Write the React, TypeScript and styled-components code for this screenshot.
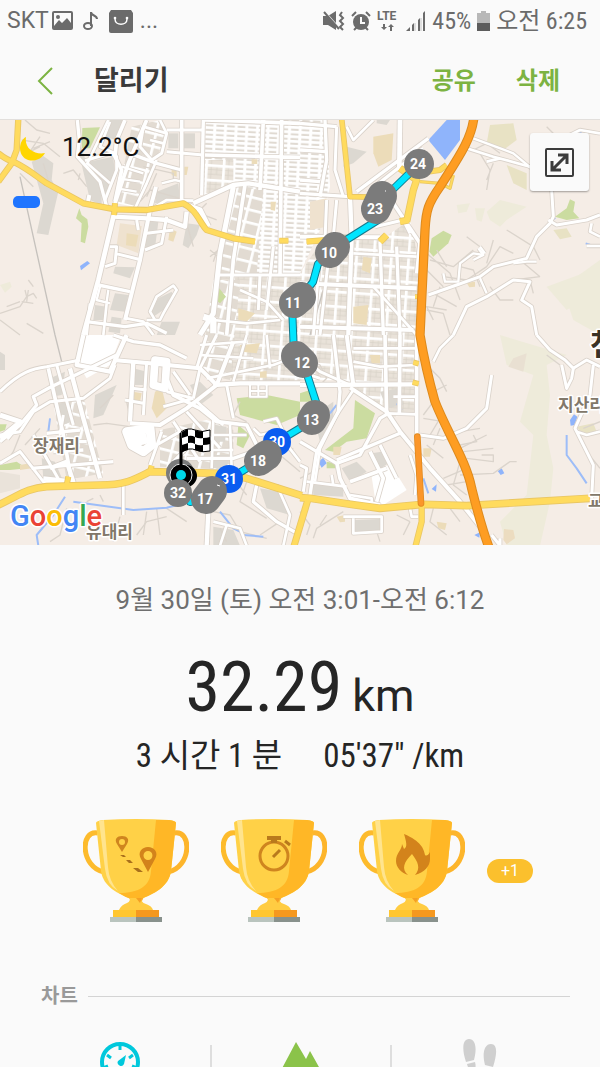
import React from 'react';
import styled, { createGlobalStyle } from 'styled-components';

const GlobalStyle = createGlobalStyle`
  * { box-sizing: border-box; }
  body { margin: 0; background: #fafafa; }
  button { font: inherit; color: inherit; background: none; border: 0; padding: 0; cursor: pointer; }
  h1, h2, p, ul { margin: 0; padding: 0; font-weight: inherit; }
`;

const sans = `Roboto, "Noto Sans CJK KR", sans-serif`;
const condensed = `"Roboto Condensed", Roboto, "Noto Sans CJK KR", sans-serif`;

const Screen = styled.div`
  display: flex;
  flex-direction: column;
  height: 100vh;
  overflow: hidden;
  background: #fafafa;
  font-family: ${sans};
  color: #252525;
`;

const StatusBar = styled.div`
  display: flex;
  flex: none;
  justify-content: space-between;
  align-items: center;
  height: 41px;
  padding: 0 13px 0 7px;
  color: #6b6b6b;
  font-size: 23px;
  line-height: 40px;
`;

const StatusGroup = styled.div<{ $gap: number }>`
  display: flex;
  align-items: center;
  gap: ${(p) => p.$gap}px;
  white-space: nowrap;
  svg { display: block; flex: none; }
`;

const StatusText = styled.span`
  font-family: ${condensed};
  font-size: 24px;
`;

const Header = styled.header`
  display: flex;
  flex: none;
  align-items: center;
  height: 79px;
  padding: 2px 40px 0 37px;
  border-bottom: 1px solid #e2dfdc;
`;

const BackButton = styled.button`
  display: flex;
  width: 57px;
  height: 48px;
  align-items: center;
`;

const Title = styled.h1`
  flex: 1;
  font-size: 27px;
  line-height: 40px;
  font-weight: 700;
  color: #3a3a3a;
`;

const Actions = styled.div`
  display: flex;
  gap: 40px;
`;

const TextButton = styled.button`
  font-size: 24px;
  line-height: 40px;
  font-weight: 700;
  color: #7cb342;
`;

const Content = styled.main`
  flex: 1;
  min-height: 0;
  overflow-y: auto;
  scrollbar-width: none;
`;

const MapPanel = styled.section`
  position: relative;
  > svg { display: block; width: 100%; height: auto; }
`;

const Weather = styled.div`
  position: absolute;
  top: 11px;
  left: 18px;
  display: flex;
  align-items: center;
  gap: 14px;
  font-size: 26px;
  line-height: 32px;
  color: #111;
`;

const ExpandButton = styled.button`
  position: absolute;
  top: 13px;
  right: 11px;
  display: flex;
  align-items: center;
  justify-content: center;
  width: 59px;
  height: 58px;
  border-radius: 3px;
  background: #fafafa;
  box-shadow: 0 1px 2px rgba(0, 0, 0, 0.35);
`;

const Summary = styled.section`
  display: flex;
  flex-direction: column;
  align-items: center;
`;

const DateLine = styled.p`
  margin-top: 35px;
  font-size: 26px;
  line-height: 40px;
  color: #6f6f6f;
`;

const Distance = styled.p`
  display: flex;
  align-items: baseline;
  gap: 10px;
  margin-top: 25px;
  font-family: ${condensed};
  font-size: 70px;
  line-height: 84px;
`;

const Unit = styled.span`
  font-family: ${sans};
  font-size: 45px;
  line-height: 46px;
`;

const Stats = styled.div`
  display: flex;
  gap: 41px;
  margin-top: 3px;
  font-family: ${condensed};
  font-size: 33px;
  line-height: 48px;
`;

const Awards = styled.ul`
  display: flex;
  align-items: center;
  gap: 32px;
  margin-top: 39px;
  padding-left: 16px;
  list-style: none;
  svg { display: block; }
`;

const MoreBadge = styled.button`
  width: 46px;
  height: 24px;
  margin-left: -10px;
  border-radius: 12px;
  background: #fbc02d;
  color: #fff;
  font-size: 16px;
  line-height: 24px;
`;

const SectionTitle = styled.h2`
  display: flex;
  align-items: center;
  gap: 10px;
  margin: 59px 30px 0 41px;
  font-size: 20px;
  line-height: 28px;
  font-weight: 700;
  color: #999;
  &::after {
    content: '';
    flex: 1;
    height: 1px;
    background: #d4d4d4;
  }
`;

const ChartTabs = styled.div`
  display: flex;
  margin: 28px 30px 0;
  padding-bottom: 30px;
`;

const ChartTab = styled.button`
  flex: 1;
  display: flex;
  justify-content: center;
  height: 48px;
  & + & { background: linear-gradient(#dedede, #dedede) left 7px / 2px 34px no-repeat; }
`;

/* ---------- map data, drawn on a 1800 x 1275 canvas of four tiles ---------- */

type Road = [string, number];
interface Tile {
  x: number;
  y: number;
  areas: [string, string][];
  lanes: string[];
  roads: Road[];
  yellow: Road[];
  water: string[];
}

const GREEN = '#cbdca0';
const PALE = '#eeebda';
const TAN = '#ecdcb9';
const GREY = '#dcd8d1';
const BLUE = '#8fb4fb';
const SAND = '#efe2cf';
const WHITE = '#fff';

const tiles: Tile[] = [
  {
    x: 0,
    y: 0,
    areas: [
      ['M247 24L300 22L270 85L245 85Z', GREEN],
      ['M238 265L228 295L245 310L242 365L255 370L265 320L262 298L245 285Z', GREEN],
      ['M240 438L262 423L270 430L243 451Z', BLUE],
      ['M95 125L130 108L160 130L155 180L175 215L145 345L110 340L130 250Z', GREY],
      ['M230 70L245 85L260 130L305 200L305 255L270 240Z', GREY],
      ['M360 310L425 318L415 400L350 375Z', SAND],
      ['M380 340L415 345L408 380L378 376Z', TAN],
      ['M345 440L405 442L390 475L340 460Z', GREY],
      ['M265 125L340 110L345 165L312 235Z', GREY],
      ['M330 0L370 0L350 60L310 50Z', GREY],
      ['M505 40L535 40L535 85L505 85Z', GREY],
      ['M552 40L585 40L585 85L552 85Z', GREY],
      ['M515 140L530 140L530 170L515 165Z', TAN],
      ['M553 140L565 140L560 165L553 165Z', TAN],
      ['M470 215L535 190L540 240L465 250Z', GREY],
      ['M560 310L600 315L590 345L565 385L548 375Z', GREY],
      ['M510 325L530 335L520 365L505 360Z', TAN],
      ['M445 300L475 305L465 385L435 390Z', GREY],
      ['M285 555L320 560L315 600L280 600Z', GREY],
      ['M345 520L385 525L375 575L330 570Z', GREY],
      ['M335 590L365 595L360 640L325 635Z', GREY],
      ['M515 515L520 530L490 570L460 590L455 570L475 535Z', GREY],
      ['M485 605L540 605L525 645L470 645Z', GREY],
      ['M0 495L30 485L35 500L15 518Z', PALE],
      ['M650 495L678 530L660 550L648 540Z', GREEN],
      ['M715 565L765 580L740 605L715 600Z', TAN],
      ['M755 118L772 118L772 132L755 132ZM812 245L828 245L825 272L812 270Z', TAN],
    ],
    lanes: [
      'M75 0L110 30L150 40M65 60L130 70L180 110M120 50L90 95L120 80M100 85L150 65',
      'M190 160L220 150L260 200M240 160L235 180M130 130L150 200M60 160L100 200',
      'M75 510L80 530L100 520L110 535M80 530L60 560L0 580M65 545L100 550M80 610L130 640M0 600L60 645M85 510L80 545',
      'M630 410L655 390M630 390L655 410M640 425L650 395',
      'M420 245L450 210L540 235M610 285L650 300M600 270L620 250M430 140L520 160L520 180',
      'M100 500L85 480M20 560L60 545M470 160L440 230M560 310L580 380',
    ],
    roads: [
      ['M232 0L238 60L232 110L300 185L320 260', 9],
      ['M325 0L262 130L330 190', 7],
      ['M255 122L330 100L350 110L350 150L315 240', 8],
      ['M330 5L300 80L345 100', 7],
      ['M375 0L350 60L345 110L365 150L345 245', 10],
      ['M440 0L385 130L345 250', 10],
      ['M470 120L440 190L405 265', 7],
      ['M375 95L470 130L545 150', 9],
      ['M355 175L420 185M365 140L430 160M350 205L410 215', 6],
      ['M430 20L500 40L485 100L455 120L420 80Z', 8],
      ['M480 0L500 40M450 60L490 70', 7],
      ['M545 0L545 245', 10],
      ['M500 30L610 30M500 95L610 105', 8],
      ['M610 0L605 225', 9],
      ['M580 250L700 195L745 190L900 215', 12],
      ['M545 250L600 270L625 320', 15],
      ['M485 190L525 180L545 185', 6],
      ['M468 200L452 260M268 225L263 250', 11],
      ['M450 270L500 240L580 242', 7],
      ['M345 270L295 480L250 645', 13],
      ['M450 270L420 420L375 600', 11],
      ['M340 290L440 295L500 300L555 320L560 275', 12],
      ['M500 290L485 370L435 390M440 340L520 330', 8],
      ['M410 300L415 330', 8],
      ['M345 400L425 420M330 380L350 380L345 430L315 440', 8],
      ['M295 495L390 515', 9],
      ['M325 510L320 545M300 500L290 540L330 550', 6],
      ['M465 600L450 575L470 530L520 497L530 510L490 580L480 600L440 600', 7],
      ['M700 200L660 400L640 580L600 645', 14],
      ['M735 195L700 420L680 645', 10],
      ['M260 605L375 620L440 610L500 640', 9],
      ['M380 595L430 605L460 645', 7],
      ['M270 550L260 645M320 550L310 645', 7],
      ['M650 465L900 465M780 465L775 570M820 380L800 570', 8],
      ['M615 0L900 10M615 105L900 112M790 0L780 210M845 0L840 465', 10],
      ['M720 510L800 545L850 600M640 600L740 610L840 600', 7],
      ['M610 590L640 600L640 640', 18],
    ],
    yellow: [
      ['M-5 100Q20 120 40 125C90 150 110 170 140 190L250 250L345 268L440 270L550 250C590 270 600 310 620 330L700 355L765 365', 14],
      ['M55 -5L50 90L35 130L-5 185', 14],
      ['M838 362L865 362M345 250L342 285', 13],
    ],
    water: [],
  },
  {
    x: 900,
    y: 0,
    areas: [
      ['M440 0L480 0L480 60L435 120L385 60Z', BLUE],
      ['M388 395L395 355L430 332L455 345L445 370L400 410Z', GREEN],
      ['M765 290L800 265L810 238L825 245L820 275L838 295L800 300Z', GREEN],
      ['M560 275L600 240L680 260L620 300L600 320L570 300Z', PALE],
      ['M470 255L510 250L500 275L475 280ZM525 265L555 265L545 305L530 300Z', PALE],
      ['M900 420L830 470L800 540L820 600L900 645Z', PALE],
      ['M740 500L850 460L880 520L800 570Z', PALE],
      ['M570 15L640 10L650 60L610 90L560 70Z', '#e8e2c4'],
      ['M620 135L680 160L680 210L640 190Z', '#e8e2c4'],
      ['M760 330L800 325L815 350L780 358Z', '#e8e2c4'],
      ['M220 50L280 40L275 120L235 140L220 100Z', TAN],
      ['M140 80L200 95L160 130L130 140Z', GREY],
      ['M230 0L270 0L260 15L230 10Z', GREY],
      ['M30 245L80 235L80 320L30 330Z', SAND],
      ['M160 560L205 555L200 615L160 610Z', TAN],
      ['M190 410L215 415L210 460L185 450Z', TAN],
      ['M500 488L525 485L525 500L508 502Z', TAN],
    ],
    lanes: [
      'M380 400L450 460L480 540M390 420L460 440L520 390M400 520L470 560M400 600L380 560L440 570',
      'M380 450L430 500M430 470L500 480L560 440L600 380L640 400M560 430L580 360',
      'M540 100L570 150L560 210M580 130L560 180M620 330L700 380L720 420M660 420L720 470M640 480L720 470M690 480L700 520',
      'M380 570L430 580L450 645M480 440L520 450L540 500M420 500L400 560M570 500L600 540L640 540',
      'M520 90L560 70L600 100M740 20L780 60M410 390L440 440M500 350L540 380',
    ],
    roads: [
      ['M385 55L170 215M370 85L230 195', 9],
      ['M300 0L298 150', 13],
      ['M0 220L150 230M0 180L60 185M0 90L80 95M0 10L110 20', 9],
      ['M75 0L80 120L60 230', 9],
      ['M110 20L105 150L130 230', 8],
      ['M200 20L160 60L140 20M200 20L220 0', 7],
      ['M500 85L580 110L690 140', 7],
      ['M520 55L640 100L700 150', 6],
      ['M560 125L600 115', 7],
      ['M755 210L760 290L750 310L710 350L680 415L580 440L540 470L470 495L385 525', 8],
      ['M745 300L770 315L860 300L900 285', 8],
      ['M900 350L870 335L875 310M860 378L900 378', 7],
      ['M430 460L435 485L475 485L480 430L520 400L550 405', 6],
      ['M535 385L550 405L520 420M540 380L555 400', 6],
      ['M540 475L560 520M640 430L680 425L710 425', 6],
      ['M460 645L500 560L560 530L640 480L690 485L665 540L695 560L710 645', 8],
      ['M780 60L840 30L900 40', 7],
      ['M280 250L360 370L350 460', 10],
      ['M225 320L310 300L330 340', 8],
      ['M150 230L155 350L145 645', 12],
      ['M80 240L75 360M110 240L100 350', 8],
      ['M240 365L250 645M290 380L300 645', 9],
      ['M0 490L350 505M0 350L240 352M0 620L340 630', 11],
      ['M220 500L350 645M160 400L350 410', 7],
      ['M60 400L40 645M85 420L60 645', 8],
    ],
    yellow: [
      ['M125 -5L150 230L240 232', 12],
      ['M300 145L350 180L340 210L320 305M325 300L300 305M260 345L240 365', 17],
      ['M350 160L420 150L440 135', 13],
      ['M360 185L420 190L450 205L460 165', 5],
      ['M20 365L140 355', 14],
      ['M345 530L360 530', 10],
    ],
    water: ['M830 32L845 38M760 290L765 298M857 370L870 374'],
  },
  {
    x: 0,
    y: 645,
    areas: [
      ['M0 50L15 60L15 105L0 105Z', GREY],
      ['M285 180L350 150L310 240L280 250Z', GREY],
      ['M255 0L365 0L330 90L260 130L235 90Z', WHITE],
      ['M150 130L195 110L185 180L155 185ZM165 210L205 200L215 260L175 275Z', GREY],
      ['M210 208L222 265L215 265L205 208Z', '#8f9bb0'],
      ['M465 170L485 160L500 220L470 250L455 220Z', TAN],
      ['M400 170L425 175L420 200L400 205Z', TAN],
      ['M400 100L440 110L430 150L400 150Z', GREY],
      ['M710 190L800 180L900 200L900 240L830 270L720 240Z', GREEN],
      ['M715 270L750 300L730 340L710 330Z', GREEN],
      ['M0 390L50 380L80 400L30 405L0 405Z', GREEN],
      ['M0 268L20 268L15 285L0 290Z', GREEN],
      ['M125 370L165 380L190 440L130 430Z', GREY],
      ['M60 390L90 385L95 400L60 405Z', TAN],
      ['M590 300L620 300L620 340L590 335Z', GREEN],
      ['M640 270L680 275L675 320L640 320ZM640 360L690 360L680 400L640 400Z', GREY],
      ['M720 30L780 25L770 55L725 50Z', TAN],
      ['M780 110L800 108L800 128L780 128Z', TAN],
      ['M570 150L600 140L640 180L600 210Z', GREY],
      ['M0 410L60 420L60 460L0 475Z', '#eae3da'],
      ['M780 460L840 470L870 540L800 520Z', GREY],
      ['M640 575L700 585L720 632L640 632Z', GREY],
    ],
    lanes: [
      'M280 270L320 265L390 275M20 380L40 350L60 300M75 330L120 280',
      'M300 480L310 500M200 520L180 600L150 620M260 500L280 490M360 545L340 620M440 530L430 600',
      'M410 600L440 560L500 545M470 520L480 600M500 520L560 560M640 530L690 540L720 590L800 610',
      'M700 430L740 480M740 440L720 500L800 550M780 600L840 560M660 580L680 620M720 200L700 240L740 260',
      'M760 320L820 360L880 340M840 360L900 410M300 220L340 180M380 200L400 300',
    ],
    roads: [
      ['M0 170C60 110 100 100 140 95L240 75', 8],
      ['M250 0L230 90L330 110L380 0', 12],
      ['M340 75L450 85L600 100L650 150', 11],
      ['M0 320L60 270L110 210L100 185L145 160L350 60', 9],
      ['M0 300L60 290L100 230L150 200L250 190L330 130L345 90', 8],
      ['M145 100L190 300L215 440', 10],
      ['M170 90L220 270M190 240L180 300', 8],
      ['M210 100L250 250L300 430', 12],
      ['M140 295L240 285M150 320L260 320M95 400L340 380M160 350L250 345', 9],
      ['M0 385L60 350L130 440L200 440M100 300L180 440', 8],
      ['M0 310L50 270M0 240L60 260L20 310', 14],
      ['M130 430L220 440L200 380L150 400', 12],
      ['M400 80L390 260', 12],
      ['M440 80L430 240M395 160L440 165M375 195L430 205', 8],
      ['M380 290L450 280L455 330L430 350L395 330Z', 26],
      ['M415 290L425 330', 40],
      ['M465 75L500 80L495 160L460 150Z', 22],
      ['M390 265L480 270L560 220L650 150L700 20', 11],
      ['M500 130L520 180L600 220L650 260L740 270L770 330', 10],
      ['M500 170L580 190M490 215L580 190M520 110L570 180', 8],
      ['M485 290L450 390M520 260L600 380M540 290L470 330M560 340L520 380', 8],
      ['M640 150L720 145L900 145', 12],
      ['M650 0L600 100L580 190M620 0L590 100', 8],
      ['M600 60L760 70M600 30L740 20M620 130L820 90L900 60M800 0L810 100M740 0L700 140', 7],
      ['M560 230L660 340M590 200L670 270', 8],
      ['M750 150L750 185L800 185L800 150M750 168L800 168M775 150L775 185', 5],
      ['M680 150L700 250', 8],
      ['M370 440L370 540', 7],
      ['M640 250L635 400M690 270L695 400M640 300L740 300M640 345L700 345', 7],
      ['M560 370L700 370L760 350', 9],
      ['M790 260L830 250L850 290M760 280L780 300L830 290L900 380', 7],
      ['M625 530L620 632', 12],
      ['M770 450L760 500L830 560L900 600', 9],
      ['M640 560L720 580L740 632M680 570L660 632', 7],
      ['M830 450L870 540L850 632', 7],
      ['M340 0L400 20L480 30L560 70', 9],
    ],
    yellow: [
      ['M-5 510C60 480 80 460 140 455L300 450C380 450 410 430 450 410L650 415L740 430L905 482', 18],
      ['M205 425L200 450M455 392L450 412', 13],
      ['M925 490L880 640', 16],
    ],
    water: ['M115 632L110 600L160 540L195 485', 'M220 500L400 525L500 518L570 500', 'M660 530L700 580L720 590', 'M730 600L790 605', 'M145 290L150 250'],
  },
  {
    x: 900,
    y: 645,
    areas: [
      ['M600 0L800 60L740 90L750 180L740 300L760 400L750 500L720 632L620 632L600 560L680 480L700 300L660 260L700 120L620 90Z', PALE],
      ['M640 70L680 55L670 110L625 95Z', '#e9e0d2'],
      ['M165 195L225 235L200 310L140 320L100 350L75 345L160 280Z', GREEN],
      ['M0 175L30 165L40 200L0 200Z', GREEN],
      ['M55 380L70 368L80 385L65 398Z', BLUE],
      ['M810 255L822 238L832 245L825 270L812 272Z', BLUE],
      ['M593 408L605 400L613 415L602 420Z', BLUE],
      ['M395 462L410 448L408 470Z', BLUE],
      ['M523 600L540 592L538 608Z', BLUE],
      ['M80 380L105 385L105 400L80 400Z', GREEN],
      ['M210 60L240 60L240 85L215 85Z', TAN],
      ['M100 335L125 335L120 360L100 360Z', TAN],
      ['M410 560L440 565L435 585L415 580Z', TAN],
      ['M612 582L640 585L645 610L620 628L610 615Z', '#ecdcc0'],
      ['M370 340L395 340L390 365L370 365Z', TAN],
      ['M830 275L880 265L890 290L850 300Z', '#e8e2c4'],
      ['M110 545L135 540L135 560L120 562Z', TAN],
      ['M38 445L130 455L130 485L40 480Z', GREY],
      ['M215 355L245 350L265 385L235 405Z', GREY],
      ['M125 400L170 380L200 410L150 440Z', GREY],
      ['M160 555L240 552L240 585L165 592Z', GREY],
      ['M215 425L270 385L320 465L250 510L225 490Z', WHITE],
      ['M240 170L300 160L310 210L260 220Z', GREY],
      ['M40 240L100 200L100 260L60 320Z', GREY],
    ],
    lanes: [
      'M370 250L430 260M380 90L420 130L440 170M400 200L370 240M420 250L390 300M440 150L400 170',
      'M480 330L530 320L520 300M490 350L580 340M500 370L580 380L580 360L545 360M480 420L580 415L630 380L650 380',
      'M430 430L500 400M440 450L500 440M440 300L480 340L560 300M380 330L430 370M400 420L370 380',
      'M40 610L50 580L130 530M0 530L30 570L20 600M230 590L240 620M60 570L80 540M290 540L330 560',
      'M400 520L390 560L440 600M330 560L310 600M450 520L480 560M480 290L540 280M420 280L400 330M0 430L60 400',
      'M850 280L900 260M860 350L900 400M780 90L740 60M480 380L460 450L500 480M0 60L60 90L80 130L40 170L80 240',
    ],
    roads: [
      ['M0 150L350 148', 12],
      ['M150 158L260 230L300 290L390 400L480 500L560 600', 11],
      ['M350 0L350 300', 10],
      ['M255 0L260 240M300 0L298 235', 10],
      ['M140 0L160 150', 11],
      ['M160 40L350 40M160 80L240 95L350 90M280 185L350 185M260 235L350 238', 7],
      ['M100 0L120 170L115 230L50 350L30 480', 9],
      ['M160 165L110 240L60 340L45 440', 7],
      ['M265 235L240 250L180 360L110 385L0 320', 9],
      ['M0 390L20 400L10 470', 8],
      ['M110 380L120 430L150 490L240 510M150 440L260 400M210 350L250 430L230 500', 10],
      ['M150 480L215 490L215 505L150 500', 7],
      ['M20 440L140 455M95 420L100 450', 7],
      ['M300 295L110 375M240 330L290 430', 9],
      ['M130 545L245 545L245 590L160 595L160 550', 7],
      ['M360 300L430 310L500 280L560 220L575 120', 8],
      ['M710 0L750 45L795 75L820 100L815 130L800 160L785 90', 8],
      ['M400 80L420 40L460 0', 7],
      ['M820 100L860 75L900 95', 8],
      ['M880 90L870 180L825 280L880 390L875 490', 8],
      ['M830 290L860 300L900 290', 7],
      ['M330 360L350 420L345 480M330 520L335 545L355 545', 7],
      ['M0 60L60 110L150 150M0 110L60 130', 8],
      ['M575 600L600 632L600 610', 8],
    ],
    yellow: [
      ['M0 488L30 490L150 508L240 520L370 508L500 512L870 490', 18],
      ['M365 510L365 560L345 640', 14],
      ['M340 82L356 86M338 142L356 146', 12],
    ],
    water: ['M800 300L800 360L830 400L860 445', 'M290 205L305 225M370 430L385 475', 'M110 210L90 235'],
  },
];

const HIGHWAY =
  'M1422 -10C1415 60 1370 120 1320 200C1285 250 1278 270 1275 330L1260 645C1270 705 1285 775 1305 845C1340 935 1400 1025 1415 1105C1430 1165 1445 1225 1468 1285';
const SPUR = 'M1252 950L1263 1150';

const ROUTE =
  'M419 164L382 200L378 220L335 247L318 264L313 282L301 297L292 305L294 355L303 362L317 405L312 421L277 442L259 461L229 479L206 498L190 502L181 475';

const markers: { n: string; x: number; y: number; blue?: boolean; tx?: number; ty?: number }[] = [
  { n: '24', x: 419, y: 164 },
  { n: '23', x: 376, y: 209, tx: 382, ty: 196 },
  { n: '10', x: 330, y: 253, tx: 335, ty: 247 },
  { n: '11', x: 294, y: 303, tx: 301, ty: 297 },
  { n: '12', x: 303, y: 363, tx: 296, ty: 356 },
  { n: '13', x: 312, y: 420, tx: 315, ty: 415 },
  { n: '30', x: 277, y: 442, blue: true },
  { n: '18', x: 259, y: 461, tx: 267, ty: 455 },
  { n: '31', x: 229, y: 479, blue: true },
  { n: '17', x: 206, y: 499, tx: 212, ty: 491 },
];

const places = [
  { name: '장재리', x: 33, y: 452, size: 17, fill: '#82786a' },
  { name: '유대리', x: 86, y: 538, size: 17, fill: '#82786a' },
  { name: '지산리', x: 558, y: 411, size: 17, fill: '#82786a' },
  { name: '교', x: 588, y: 507, size: 17, fill: '#82786a' },
  { name: '천', x: 590, y: 355, size: 30, fill: '#3a3226' },
];

const googleLetters: [string, string][] = [
  ['G', '#4285f4'],
  ['o', '#ea4335'],
  ['o', '#fbbc05'],
  ['g', '#4285f4'],
  ['l', '#34a853'],
  ['e', '#ea4335'],
];

const at = (t: Tile) => `translate(${t.x} ${t.y})`;

function RouteMap() {
  return (
    <svg viewBox="0 120 600 425" role="img" aria-label="달리기 경로 지도">
      <defs>
        <pattern id="fine" width="32" height="14" patternUnits="userSpaceOnUse" patternTransform="rotate(3)">
          <rect width="32" height="14" fill="#e0dad2" />
          <path d="M0 4H32" stroke="#fff" strokeWidth="8" />
          <path d="M5 0V14" stroke="#fff" strokeWidth="9" />
        </pattern>
        <pattern id="blocks" width="52" height="44" patternUnits="userSpaceOnUse" patternTransform="rotate(4)">
          <rect width="52" height="44" fill="#e9e2d9" />
          <path d="M0 16H52M0 30H52M18 0V44M35 4V30" stroke="#d8d1c7" strokeWidth="2" />
          <path d="M0 4H52M4 0V44" stroke="#fff" strokeWidth="8" />
        </pattern>
        <pattern id="slanted" width="46" height="38" patternUnits="userSpaceOnUse" patternTransform="rotate(14)">
          <rect width="46" height="38" fill="#e2dbd2" />
          <path d="M4 0V38M0 4H46" stroke="#fff" strokeWidth="8" />
        </pattern>
      </defs>
      <rect x="0" y="120" width="600" height="425" fill="#f5ede6" />
      <g transform="translate(0 120) scale(0.33333)" fill="none" strokeLinejoin="round">
        {tiles.map((t, i) => (
          <g key={i} transform={at(t)}>
            {t.areas.filter((a) => a[1] === PALE).map(([d, c], j) => (
              <path key={j} d={d} fill={c} />
            ))}
          </g>
        ))}
        <path d="M615 0H980L990 200L960 330L900 460H660L705 200L612 225Z" fill="url(#fine)" />
        <path d="M615 120H700V200L612 225Z" fill="url(#blocks)" />
        <path d="M705 200L790 210L770 465H655Z" fill="url(#slanted)" />
        <path d="M660 465L900 460L960 370L1150 355L1230 300L1265 460L1250 880L1180 890L1060 800L1000 780L760 785L600 760L640 645Z" fill="url(#blocks)" />
        <path d="M395 20L480 0L500 40L440 190L400 260L350 250Z" fill="url(#slanted)" />
        <path d="M640 480L720 480L690 780L600 760Z" fill="url(#slanted)" />
        <path d="M480 930L620 900L700 930L700 1050L480 1040Z" fill="url(#slanted)" />
        <path d="M160 850L250 830L310 1060L200 1080Z" fill="url(#slanted)" />
        {tiles.map((t, i) => (
          <g key={i} transform={at(t)}>
            {t.areas.filter((a) => a[1] !== PALE).map(([d, c], j) => (
              <path key={j} d={d} fill={c} />
            ))}
            {t.lanes.map((d, j) => (
              <path key={j} d={d} stroke="#dbd4cc" strokeWidth={4} />
            ))}
            {t.water.map((d, j) => (
              <path key={j} d={d} stroke="#9dbdf8" strokeWidth={6} />
            ))}
          </g>
        ))}
        <path d="M105 130L112 130" />
        <path d="M60 170L165 645L185 725" stroke="#c6c2bd" strokeWidth="4" />
        <path d="M970 510L930 645" stroke="#c6c2bd" strokeWidth="4" />
        {tiles.map((t, i) => (
          <g key={i} transform={at(t)} stroke="#dad2ca">
            {t.roads.map(([d, w], j) => (
              <path key={j} d={d} strokeWidth={w + 6} />
            ))}
          </g>
        ))}
        {tiles.map((t, i) => (
          <g key={i} transform={at(t)} stroke="#fff">
            {t.roads.map(([d, w], j) => (
              <path key={j} d={d} strokeWidth={w + 1} />
            ))}
          </g>
        ))}
        {tiles.map((t, i) => (
          <g key={i} transform={at(t)} stroke="#e9c664">
            {t.yellow.map(([d, w], j) => (
              <path key={j} d={d} strokeWidth={w + 5} />
            ))}
          </g>
        ))}
        {tiles.map((t, i) => (
          <g key={i} transform={at(t)} stroke="#ffdb5e">
            {t.yellow.map(([d, w], j) => (
              <path key={j} d={d} strokeWidth={w} />
            ))}
          </g>
        ))}
        <g strokeLinecap="round">
          <path d={HIGHWAY} stroke="#dd8a1d" strokeWidth="28" />
          <path d={HIGHWAY} stroke="#fe9d22" strokeWidth="22" />
          <path d={SPUR} stroke="#e08a20" strokeWidth="20" />
          <path d={SPUR} stroke="#fb962a" strokeWidth="15" />
        </g>
      </g>

      <g fontFamily='"Noto Sans CJK KR", sans-serif' fontWeight="700" stroke="#fff" strokeWidth="3" strokeLinejoin="round" paintOrder="stroke">
        {places.map((p) => (
          <text key={p.name} x={p.x} y={p.y} fontSize={p.size} fill={p.fill}>
            {p.name}
          </text>
        ))}
      </g>
      <text x="10" y="526" fontFamily="Roboto, sans-serif" fontSize="29" fontWeight="500" stroke="#fff" strokeWidth="3" strokeLinejoin="round" paintOrder="stroke">
        {googleLetters.map(([c, fill], i) => (
          <tspan key={i} fill={fill}>{c}</tspan>
        ))}
      </text>
      <rect x="13" y="196" width="27" height="12" rx="5" fill="#1f75ff" />

      <g fill="none" strokeLinejoin="round">
        <path d={ROUTE} stroke="#14788c" strokeWidth="8" />
        <path d={ROUTE} stroke="#00e5ff" strokeWidth="6" />
      </g>
      {markers.filter((m) => m.blue).map((m) => (
        <circle key={m.n} cx={m.x} cy={m.y} r="14" fill="#0a5cf0" />
      ))}
      <g fontFamily={sans} fontSize="14" fontWeight="700" fill="#fff" textAnchor="middle">
        {markers.filter((m) => m.blue).map((m) => (
          <text key={m.n} x={m.x} y={m.y + 5}>{m.n}</text>
        ))}
        {markers.filter((m) => !m.blue).map((m) => (
          <g key={m.n}>
            <path d={`M${m.x} ${m.y}L${m.tx ?? m.x} ${m.ty ?? m.y}l0 .1`} stroke="#7b7b7b" strokeWidth="30" strokeLinecap="round" strokeLinejoin="round" fill="none" />
            <text x={m.x - 1} y={m.y + 5}>{m.n}</text>
          </g>
        ))}
        <path d="M217 485l3 1M385 191h1" stroke="#fff" strokeWidth="1" />
        <circle cx="180" cy="473" r="14" fill="#7b7b7b" />
        <circle cx="186" cy="476" r="11" fill="#000" />
        <circle cx="181" cy="475" r="11" fill="#000" stroke="#e8e8e8" strokeWidth="1" />
        <circle cx="178" cy="493" r="14" fill="#7b7b7b" />
        <text x="178" y="498">32</text>
      </g>
      <path d="M181 433V470" stroke="#000" strokeWidth="3" />
      <path d="M181 432Q188 427 195 430T210 430V451Q203 453 196 450T182 452Z" fill="#fff" stroke="#000" strokeWidth="1" />
      <path d="M182 432Q185 430 188 429V436Q185 437 182 438ZM195 430Q199 432 203 431V438Q199 439 195 437ZM188 436Q192 435 195 437V444Q192 442 188 443ZM203 438Q207 438 210 437V444Q207 445 203 445ZM182 445Q185 444 188 443V450Q185 451 182 452ZM195 444Q199 446 203 445V452Q199 452 195 450Z" fill="#000" />
      <circle cx="181" cy="475" r="5" fill="#00d8e8" />
    </svg>
  );
}

function Trophy({ children, label }: { children: React.ReactNode; label: string }) {
  return (
    <svg width="106" height="104" viewBox="0 0 106 104" role="img" aria-label={label}>
      <path d="M15 14C-3 10 -3 48 21 53" fill="none" stroke="#fdbb2c" strokeWidth="5" />
      <path d="M91 14C109 10 109 48 85 53" fill="none" stroke="#fdb52b" strokeWidth="5" />
      <path d="M46 78C48 82 46 85 42 87H64C58 85 58 82 61 78Z" fill="#ffcf45" />
      <path d="M53 78H61C58 82 58 85 61 87Q54 83 53 78Z" fill="#f59a22" />
      <path d="M13 4Q13 2 20 1Q53 -1 86 1Q93 2 93 4L88 52C86 68 70 75 58 80H48C36 75 20 68 18 52Z" fill="#ffd147" />
      <path d="M73 1L86 1Q93 2 93 4L88 52C86 68 70 75 58 80H48Q42 78 36 74C55 74 67 68 68 52Z" fill="#ffb726" />
      <path d="M16 2L21 1L25 48Q26 62 35 72Q24 66 22 50Z" fill="#ffe48e" />
      <path d="M47 79H59Q57 83 63 85Q69 87 70 91H36Q38 86 44 84Q48 82 47 79Z" fill="#ffcc42" />
      <path d="M53 79H59L57 84Z" fill="#f5a024" />
      <path d="M30 91H53V98H30Z" fill="#ffc62f" />
      <path d="M53 91H76V98H53Z" fill="#f5981f" />
      <path d="M27 98H53V103H27Z" fill="#b9c4be" />
      <path d="M53 98H79V103H53Z" fill="#88918c" />
      {children}
    </svg>
  );
}

function PictureIcon() {
  return (
    <svg width="21" height="19" viewBox="0 0 21 19">
      <rect x="1" y="1" width="19" height="17" rx="1" fill="none" stroke="#6b6b6b" strokeWidth="2" />
      <circle cx="6" cy="6" r="2" fill="#6b6b6b" />
      <path d="M2 15L7 9L10 12L15 7L19 12V17H2Z" fill="#6b6b6b" />
    </svg>
  );
}

function NoteIcon() {
  return (
    <svg width="16" height="20" viewBox="0 0 16 20" fill="none" stroke="#6b6b6b" strokeWidth="2">
      <ellipse cx="5" cy="15" rx="4" ry="3" />
      <path d="M8 15V1C8 5 14 4 14 8" />
    </svg>
  );
}

function BagIcon() {
  return (
    <svg width="24" height="24" viewBox="0 0 24 24">
      <path d="M2 1H22L24 4V22Q24 24 22 24H2Q0 24 0 22V4Z" fill="#6b6b6b" />
      <path d="M6 10C6 17 18 17 18 10" fill="none" stroke="#fff" strokeWidth="1.500" />
      <circle cx="6" cy="9" r="1.300" fill="#fff" />
      <circle cx="18" cy="9" r="1.300" fill="#fff" />
    </svg>
  );
}

function SilentIcon() {
  return (
    <svg width="22" height="20" viewBox="0 0 22 20" fill="#6b6b6b">
      <path d="M0 5H5L13 0V19L5 14H0Z" />
      <path d="M0 -1L15 16" stroke="#fafafa" strokeWidth="2" />
      <path d="M1 1L16 18" stroke="#6b6b6b" strokeWidth="2" />
      <path d="M19 1L17 4L20 7L17 10L20 13L17 16L20 19" fill="none" stroke="#6b6b6b" strokeWidth="2" />
    </svg>
  );
}

function AlarmIcon() {
  return (
    <svg width="20" height="20" viewBox="0 0 20 20">
      <circle cx="10" cy="11" r="8" fill="#6b6b6b" />
      <path d="M1 5L5 1M19 5L15 1M3 19L6 16M17 19L14 16" stroke="#6b6b6b" strokeWidth="2" />
      <path d="M10 6V12H14" fill="none" stroke="#fafafa" strokeWidth="2" />
    </svg>
  );
}

function LteIcon() {
  return (
    <svg width="23" height="20" viewBox="0 0 23 20">
      <text x="0" y="9" fontFamily={sans} fontWeight="700" fontSize="12" fill="#6b6b6b">LTE</text>
      <path d="M7 13V17M14 20V16" stroke="#6b6b6b" strokeWidth="2" />
      <path d="M4 16H10L7 19ZM11 16H17L14 13Z" fill="#6b6b6b" />
    </svg>
  );
}

function SignalIcon() {
  return (
    <svg width="20" height="20" viewBox="0 0 20 20">
      <path d="M0 20L4 16V20ZM6 14L8 12V20H6ZM12 9L14 7V20H12ZM17 2L19 0V20H17Z" fill="#6b6b6b" />
      <path d="M9 12V20M15 7V20" stroke="#c4c4c4" strokeWidth="1" />
    </svg>
  );
}

function BatteryIcon() {
  return (
    <svg width="13" height="20" viewBox="0 0 13 20">
      <path d="M4 0H9V2H13V20H0V2H4Z" fill="#b8b8b8" />
      <path d="M0 12H13V20H0Z" fill="#5c5c5c" />
    </svg>
  );
}

export default function App() {
  return (
    <Screen>
      <GlobalStyle />
      <StatusBar>
        <StatusGroup $gap={10}>
          <StatusGroup $gap={3}>
            <span>SKT</span>
            <PictureIcon />
          </StatusGroup>
          <NoteIcon />
          <StatusGroup $gap={7}>
            <BagIcon />
            <span>...</span>
          </StatusGroup>
        </StatusGroup>
        <StatusGroup $gap={6}>
          <SilentIcon />
          <AlarmIcon />
          <LteIcon />
          <SignalIcon />
          <StatusText>45%</StatusText>
          <BatteryIcon />
          <StatusText>오전 6:25</StatusText>
        </StatusGroup>
      </StatusBar>
      <Header>
        <BackButton aria-label="뒤로">
          <svg width="17" height="28" viewBox="0 0 17 28">
            <path d="M15 1L2 14L15 27" fill="none" stroke="#7cb342" strokeWidth="2" />
          </svg>
        </BackButton>
        <Title>달리기</Title>
        <Actions>
          <TextButton>공유</TextButton>
          <TextButton>삭제</TextButton>
        </Actions>
      </Header>
      <Content>
        <MapPanel>
          <RouteMap />
          <Weather>
            <svg width="30" height="30" viewBox="0 0 30 30">
              <path d="M8 5C0 9 0 23 8 27C15 31 24 27 27 21C17 23 6 17 8 5Z" fill="#ffd600" />
            </svg>
            <span>12.2°C</span>
          </Weather>
          <ExpandButton aria-label="지도 확대">
            <svg width="29" height="29" viewBox="0 0 29 29" fill="none" stroke="#3c3c3c">
              <rect x="1" y="1" width="27" height="27" rx="1" strokeWidth="2" />
              <path d="M7 22L22 7M13 7H22V16M7 13V22H16" strokeWidth="3" />
            </svg>
          </ExpandButton>
        </MapPanel>
        <Summary>
          <DateLine>9월 30일 (토) 오전 3:01-오전 6:12</DateLine>
          <Distance>
            32.29<Unit>km</Unit>
          </Distance>
          <Stats>
            <span>3 시간 1 분</span>
            <span>05'37" /km</span>
          </Stats>
          <Awards>
            <li>
              <Trophy label="최장 거리">
                <path fillRule="evenodd" d="M39 33L34 25C31 20 34 17 39 17S47 20 44 25ZM39 20A3 3 0 1 0 39 26A3 3 0 1 0 39 20Z" fill="#cf851f" />
                <path fillRule="evenodd" d="M65 53L58 40C54 33 59 28 65 28S76 33 72 40ZM65 32A4 4 0 1 0 65 41A4 4 0 1 0 65 32Z" fill="#d3831b" />
                <path d="M37 36H41L43 38H40ZM43 41H47L50 44H46ZM50 49H55L60 53H55Z" fill="#a9701c" />
              </Trophy>
            </li>
            <li>
              <Trophy label="최장 시간">
                <circle cx="53" cy="37" r="14" fill="none" stroke="#cf851f" strokeWidth="3" />
                <path d="M46 17H60V21H56V24H50V21H46Z" fill="#b97a1c" />
                <path d="M52 38L59 31M64 22L69 26" stroke="#b97a1c" strokeWidth="3" />
              </Trophy>
            </li>
            <li>
              <Trophy label="최다 칼로리">
                <path d="M45 15C47 22 49 28 45 30L43 25C43 31 37 34 37 42C37 48 42 54 49 56C42 50 45 43 53 35C59 43 62 49 56 56C66 53 71 47 71 40V33C69 37 67 37 66 36C65 30 62 22 45 15Z" fill="#d3831b" />
              </Trophy>
            </li>
            <li>
              <MoreBadge>+1</MoreBadge>
            </li>
          </Awards>
        </Summary>
        <SectionTitle>차트</SectionTitle>
        <ChartTabs>
          <ChartTab aria-label="속도">
            <svg width="48" height="48" viewBox="0 0 48 48">
              <circle cx="24" cy="24" r="18" fill="none" stroke="#00c8dc" strokeWidth="4" />
              <path d="M24 7V12M11 17L15 20M37 17L33 20M7 30L12 28M41 30L36 28" stroke="#00c8dc" strokeWidth="3" />
              <path d="M30 17L28 26A3 3 0 1 1 22 23Z" fill="#00c8dc" />
            </svg>
          </ChartTab>
          <ChartTab aria-label="고도">
            <svg width="48" height="48" viewBox="0 0 48 48">
              <path d="M2 38L20 4L30 21L34 13L48 38Z" fill="#8bc34a" />
            </svg>
          </ChartTab>
          <ChartTab aria-label="걸음">
            <svg width="48" height="48" viewBox="0 0 48 48" fill="#cfcfcf">
              <path d="M13 1C20 1 21 11 18 22L10 24C6 12 6 1 13 1ZM11 26L19 24C22 34 13 36 11 26Z" />
              <path d="M35 6C42 6 41 17 37 29L29 27C26 16 28 6 35 6ZM29 29L37 31C35 41 27 38 29 29Z" />
            </svg>
          </ChartTab>
        </ChartTabs>
      </Content>
    </Screen>
  );
}
